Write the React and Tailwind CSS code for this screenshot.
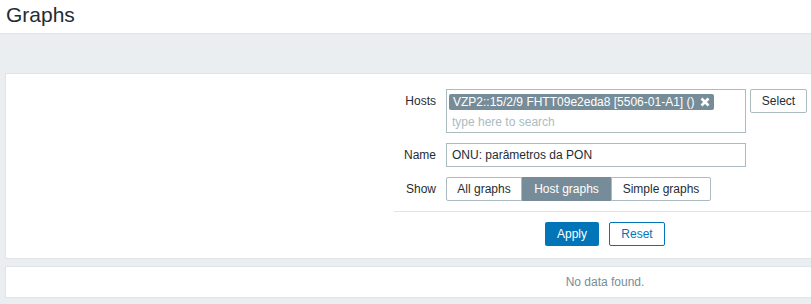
export default function App() {
  const font = { fontFamily: '"Liberation Sans", Arial, sans-serif' };
  return (
    <div className="w-[811px] h-[304px] overflow-hidden bg-[#ebeef0] text-[12px] text-[#1f2c33]" style={font}>
      <div className="w-[1210px]">
        <header className="h-[34px] bg-white border-b border-[#dfe4e7] pl-[6px] flex items-center">
          <h1 className="text-[21px] leading-none text-[#1f2c33] -mt-[4px]">Graphs</h1>
        </header>
        <div className="px-[5px] pt-[39px]">
          <div className="bg-white border border-[#dfe4e7] pt-[15px] pb-[12px]">
            <div className="w-[422px] mx-auto">
              <div className="flex flex-col gap-[10px]">
                <div className="flex gap-[10px]">
                  <div className="w-[42px] text-right pt-[5px] leading-[14px]">Hosts</div>
                  <div className="w-[300px] h-[44px] border border-[#acbbc2] px-[2px] pt-[3px]">
                    <div className="inline-flex items-center h-[16px] bg-[#768d99] text-white rounded-[2px] pl-[4px] pr-[4px] leading-none">
                      <span>VZP2::15/2/9 FHTT09e2eda8 [5506-01-A1] ()</span>
                      <svg className="ml-[6px]" width="10" height="10" viewBox="0 0 10 10">
                        <path d="M1.5 1.5 L8.5 8.5 M8.5 1.5 L1.5 8.5" stroke="white" strokeWidth="2.6" strokeLinecap="butt" />
                      </svg>
                    </div>
                    <div className="text-[#acbbc2] pl-[3px] pt-[4px] leading-[14px]">type here to search</div>
                  </div>
                  <button className="-ml-[6px] w-[57px] h-[24px] border border-[#acbbc2] bg-white rounded-[2px] text-[#1f2c33]">Select</button>
                </div>
                <div className="flex gap-[10px] items-center">
                  <div className="w-[42px] text-right">Name</div>
                  <div className="w-[300px] h-[24px] border border-[#acbbc2] px-[5px] flex items-center">ONU: parâmetros da PON</div>
                </div>
                <div className="flex gap-[10px] items-center">
                  <div className="w-[42px] text-right">Show</div>
                  <div className="flex h-[24px]">
                    <div className="w-[76px] border border-[#acbbc2] rounded-l-[2px] flex items-center justify-center">All graphs</div>
                    <div className="w-[89px] bg-[#768d99] text-white border-y border-[#768d99] flex items-center justify-center">Host graphs</div>
                    <div className="w-[100px] border border-[#acbbc2] rounded-r-[2px] flex items-center justify-center">Simple graphs</div>
                  </div>
                </div>
              </div>
              <div className="border-t border-[#dfe4e7] mt-[10px] pt-[10px] flex justify-center gap-[10px]">
                <button className="w-[54px] h-[24px] bg-[#0275b8] text-white rounded-[2px]">Apply</button>
                <button className="w-[56px] h-[24px] bg-white border border-[#0275b8] text-[#0275b8] rounded-[2px]">Reset</button>
              </div>
            </div>
          </div>
          <div className="mt-[7px] bg-white border border-[#dfe4e7] h-[32px] flex items-center justify-center text-[#768d99]">
            No data found.
          </div>
        </div>
      </div>
    </div>
  );
}
